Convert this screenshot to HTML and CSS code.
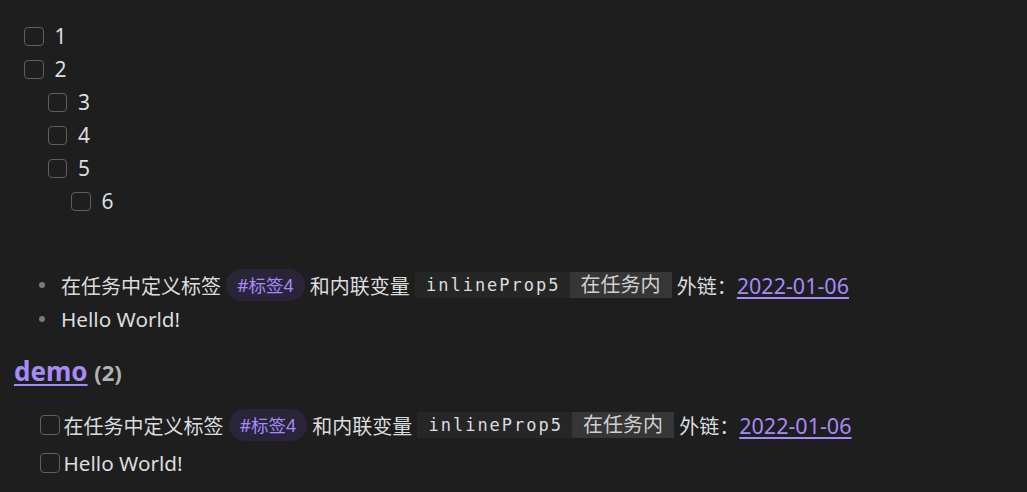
FILE: index.html
```html
<!DOCTYPE html>
<html lang="zh">
<head>
<meta charset="utf-8">
<title>Tasks</title>
<link rel="stylesheet" href="styles.css">
</head>
<body>
<div class="page">
  <ul class="checklist">
    <li><span class="row"><span class="box"></span><span class="label">1</span></span></li>
    <li><span class="row"><span class="box"></span><span class="label">2</span></span>
      <ul class="checklist nested">
        <li><span class="row"><span class="box"></span><span class="label">3</span></span></li>
        <li><span class="row"><span class="box"></span><span class="label">4</span></span></li>
        <li><span class="row"><span class="box"></span><span class="label">5</span></span>
          <ul class="checklist nested">
            <li><span class="row"><span class="box"></span><span class="label">6</span></span></li>
          </ul>
        </li>
      </ul>
    </li>
  </ul>

  <ul class="bullets">
    <li class="bullet-row">在任务中定义标签 <a class="tag">#标签4</a> 和内联变量 <span class="field"><span class="field-key">inlineProp5</span><span class="field-val">在任务内</span></span> 外链：<a class="link">2022-01-06</a></li>
    <li class="bullet-row"><span class="latin">Hello World!</span></li>
  </ul>

  <h4 class="group"><a class="group-link">demo</a> <span class="count">(2)</span></h4>

  <ul class="tasks">
    <li class="task-row"><span class="box"></span><span class="task-text">在任务中定义标签 <a class="tag">#标签4</a> 和内联变量 <span class="field"><span class="field-key">inlineProp5</span><span class="field-val">在任务内</span></span> 外链：<a class="link">2022-01-06</a></span></li>
    <li class="task-row"><span class="box"></span><span class="task-text"><span class="latin">Hello World!</span></span></li>
  </ul>
</div>
</body>
</html>
```

FILE: styles.css
```css
html, body {
  margin: 0;
  padding: 0;
  background: #1e1e1e;
}

body {
  color: #dcddde;
  font-family: "Noto Sans", "Noto Sans CJK SC", sans-serif;
  font-size: 20px;
  width: 1027px;
  height: 492px;
  overflow: hidden;
}

.page {
  padding: 20px 0 0 14px;
}

ul {
  list-style: none;
  margin: 0;
  padding: 0;
}

.checklist {
  padding-left: 10px;
}

.checklist.nested {
  padding-left: 23.5px;
}

.row {
  display: flex;
  align-items: center;
  height: 33px;
}

.box {
  box-sizing: border-box;
  width: 19.5px;
  height: 19.5px;
  border: 1px solid #5f5f5f;
  border-radius: 4px;
  flex: none;
}

.label {
  margin-left: 11px;
  line-height: 33px;
  font-size: 21px;
}

.latin {
  font-size: 20.7px;
}

.bullets {
  margin-top: 50px;
  padding-left: 24px;
}

.bullet-row {
  display: flex;
  align-items: center;
  height: 34px;
  white-space: pre;
}

.bullet-row::before {
  content: "";
  width: 6px;
  height: 6px;
  border-radius: 50%;
  background: #7a7a7a;
  margin: 0 16px 0 1px;
  flex: none;
}

.tag {
  display: inline-block;
  font-size: 17.5px;
  line-height: 24px;
  padding: 4px 11px;
  border-radius: 16px;
  background: #2a2438;
  color: #a68af9;
}

.field {
  display: inline-flex;
  align-items: stretch;
  height: 26px;
}

.field-key {
  background: #262626;
  font-family: "DejaVu Sans Mono", monospace;
  font-size: 17px;
  letter-spacing: 2px;
  line-height: 26px;
  padding: 0 9px 0 11px;
}

.field-val {
  background: #363636;
  line-height: 26px;
  padding: 0 11px;
  color: #d0d0d0;
}

.link {
  color: #a68af9;
  font-size: 21.5px;
  text-decoration: underline;
  text-underline-offset: 3px;
}

.group {
  margin: 17px 0 0 0;
  font-size: 26px;
  font-weight: 700;
  line-height: 36px;
}

.group-link {
  color: #a68af9;
  text-decoration: underline;
  text-decoration-thickness: 2px;
  text-underline-offset: 3px;
}

.count {
  color: #b3b3b3;
  font-size: 22px;
}

.tasks {
  margin-top: 18px;
  padding-left: 26px;
}

.task-row {
  display: flex;
  align-items: center;
  height: 34px;
  margin-bottom: 4px;
}

.task-text {
  margin-left: 4px;
  white-space: pre;
  display: flex;
  align-items: center;
}
```
